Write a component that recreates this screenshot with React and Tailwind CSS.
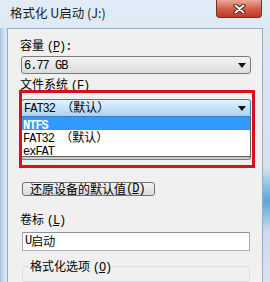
import React from 'react';

function Latin({ children, bold }) {
  return (
    <span className={`font-mono tracking-[-1px] ${bold ? 'font-bold' : ''}`}>{children}</span>
  );
}

function Arrow() {
  return (
    <svg width="8" height="5" viewBox="0 0 8 5" className="shrink-0">
      <path d="M0 0h8L4 5z" fill="#111" />
    </svg>
  );
}

function Key({ k, colon }) {
  return (
    <span className="font-mono tracking-[-1px]">
      (<span className="underline underline-offset-1">{k}</span>){colon ? ':' : ''}
    </span>
  );
}

function CloseButton() {
  return (
    <div className="absolute top-0 right-[8px] w-[46px] h-[18px] rounded-b-[4px] border border-t-0 border-[#7b2c22] bg-gradient-to-b from-[#eba99b] via-[#d45f4c] to-[#b93b28] flex items-center justify-center">
      <svg width="13" height="10" viewBox="0 0 13 10">
        <path d="M2.5 1.5 L10.5 8.5 M10.5 1.5 L2.5 8.5" stroke="#4a1d17" strokeWidth="4" strokeLinecap="round" />
        <path d="M2.5 1.5 L10.5 8.5 M10.5 1.5 L2.5 8.5" stroke="#ffffff" strokeWidth="2" strokeLinecap="round" />
      </svg>
    </div>
  );
}

export default function App() {
  return (
    <div className="relative w-[270px] h-[282px] overflow-hidden flex flex-col bg-gradient-to-b from-[#e1ecf7] via-[#cddff1] to-[#bcd3ea] text-[12px] text-black font-['Noto_Sans_CJK_SC',sans-serif]">
      {/* title bar */}
      <div className="h-[28px] shrink-0 flex items-center pl-[10px] pb-[1px] text-[12.5px] text-[#1a1a1a]">
        格式化 U启动 (J:)
      </div>
      <CloseButton />

      <div className="flex flex-1 min-h-0">
        <div className="w-[7px] shrink-0 bg-[linear-gradient(to_right,#a9c3dd,#d3e2f1_60%,#dbe7f3)]" />
        <div className="flex-1 border border-b-0 border-[#98abc0] bg-[#f0f0f0] flex flex-col pl-[13px] pr-[11px]">
          <div className="mt-[9px] h-[14px] leading-[14px] -ml-px">
            容量 <Key k="P" colon />
          </div>
          <div className="mt-[4px] h-[18px] rounded-[3px] border border-[#7a7a7a] bg-gradient-to-b from-[#f4f4f4] to-[#dcdcdc] flex items-center pl-[2px] pr-[4px]">
            <span className="flex-1">
              <Latin>6.77 GB</Latin>
            </span>
            <Arrow />
          </div>

          <div className="mt-[3px] h-[14px] leading-[14px] -ml-px">
            文件系统 <Key k="F" />
          </div>
          <div className="mt-[8px] h-[18px] rounded-t-[3px] border border-[#3c7fb1] bg-gradient-to-b from-[#e4f2fc] to-[#a9d3f3] flex items-center pl-[2px] pr-[4px]">
            <span className="flex-1">
              <Latin>FAT32 </Latin>（默认）
            </span>
            <Arrow />
          </div>
          <div className="border border-t-0 border-[#646464] bg-white">
            <div className="h-[13px] leading-[13px] bg-[#3399ff] text-white pl-[1px]">
              <Latin bold>NTFS</Latin>
            </div>
            <div className="h-[13px] leading-[13px] pl-[1px]">
              <Latin>FAT32 </Latin>（默认）
            </div>
            <div className="h-[13px] leading-[13px] pl-[1px]">
              <Latin>exFAT</Latin>
            </div>
          </div>
          <div className="h-[5px] rounded-b-[3px] border border-t-0 border-[#7a7a7a] bg-gradient-to-b from-[#bdbdbd] to-[#dcdcdc]" />

          <div className="mt-[22px] ml-px w-[133px] h-[19px] rounded-[3px] border border-[#707070] bg-gradient-to-b from-[#f4f4f4] to-[#dadada] flex items-center pl-[7px] leading-none">
            还原设备的默认值 <Key k="D" />
          </div>

          <div className="mt-[16px] h-[14px] leading-[14px] -ml-px">
            卷标 <Key k="L" />
          </div>
          <div className="mt-[6px] mx-px h-[19px] border border-[#abadb3] border-t-[#8f9399] bg-white flex items-center pl-[2px]">
            <Latin>U</Latin>启动
          </div>

          <div className="relative mt-[15px] mx-px h-[40px] rounded-[3px] border border-[#d5dfe5]">
            <div className="absolute -top-[8px] left-[5px] px-[2px] bg-[#f0f0f0] h-[14px] leading-[14px]">
              格式化选项 <Key k="O" />
            </div>
          </div>
        </div>
        <div className="w-[7px] shrink-0 bg-[linear-gradient(to_bottom,#dbe7f3,#d2e2f1_55%,#5aa6da_68%,#c9dcef_80%,#d6e4f2)]" />
      </div>

      {/* red annotation box */}
      <div className="absolute left-[19px] top-[90px] w-[236px] h-[78px] border-[3px] border-[#d3121c]" />
    </div>
  );
}
